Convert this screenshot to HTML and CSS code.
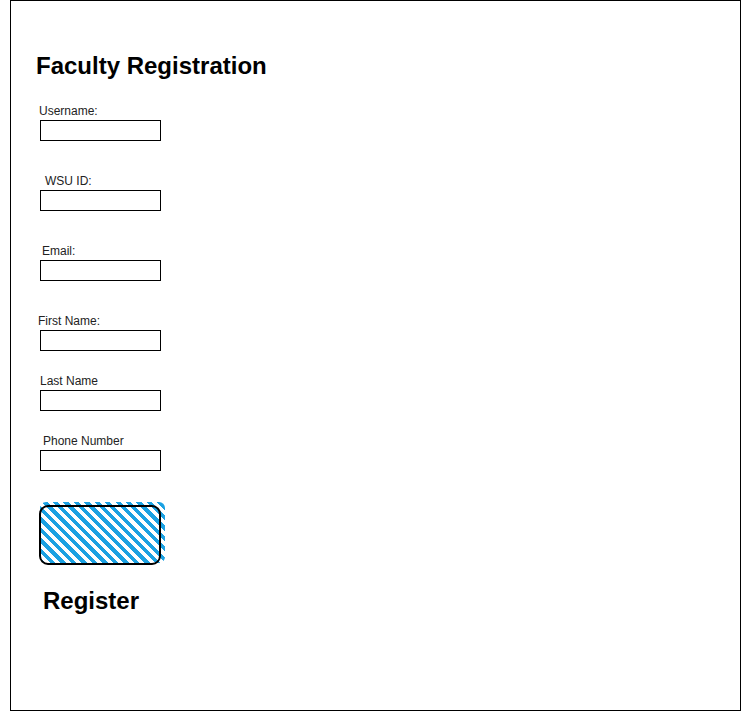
FILE: index.html
```html
<!DOCTYPE html>
<html>
<head>
<meta charset="utf-8">
<link rel="stylesheet" href="styles.css">
</head>
<body>
<div class="frame">
  <h1 class="title">Faculty Registration</h1>
  <div class="field f-user">
    <div class="label">Username:</div>
    <div class="input"></div>
  </div>
  <div class="field f-wsu">
    <div class="label">WSU ID:</div>
    <div class="input"></div>
  </div>
  <div class="field f-email">
    <div class="label">Email:</div>
    <div class="input"></div>
  </div>
  <div class="field f-first">
    <div class="label">First Name:</div>
    <div class="input"></div>
  </div>
  <div class="field f-last">
    <div class="label">Last Name</div>
    <div class="input"></div>
  </div>
  <div class="field f-phone">
    <div class="label">Phone Number</div>
    <div class="input"></div>
  </div>
  <div class="btn">
    <div class="hatch"></div>
    <div class="btn-border"></div>
  </div>
  <div class="register">Register</div>
</div>
</body>
</html>
```
FILE: styles.css
```css
html, body {
  margin: 0;
  padding: 0;
  background: #fff;
}
body {
  font-family: "Liberation Sans", Arial, sans-serif;
  color: #000;
}
.frame {
  box-sizing: border-box;
  margin-left: 10px;
  width: 731px;
  height: 711px;
  border: 1px solid #000;
  display: flex;
  flex-direction: column;
  align-items: flex-start;
}
.title {
  margin: 51px 0 0 25px;
  font-size: 24px;
  line-height: 28px;
  font-weight: bold;
}
.field {
  display: flex;
  flex-direction: column;
  align-items: flex-start;
}
.label {
  font-size: 12px;
  line-height: 14px;
  color: #222;
  padding-top: 2px;
  margin-bottom: 2px;
}
.input {
  box-sizing: border-box;
  width: 121px;
  height: 21px;
  border: 1px solid #000;
  margin-left: 29px;
}
.f-user { margin-top: 22px; }
.f-user .label { padding-left: 28px; }
.f-wsu { margin-top: 31px; }
.f-wsu .label { padding-left: 34px; }
.f-email { margin-top: 31px; }
.f-email .label { padding-left: 31px; }
.f-first { margin-top: 31px; }
.f-first .label { padding-left: 27px; }
.f-last { margin-top: 21px; }
.f-last .label { padding-left: 29px; }
.f-phone { margin-top: 21px; }
.f-phone .label { padding-left: 32px; }
.btn {
  position: relative;
  width: 126px;
  height: 63px;
  margin: 31px 0 0 28px;
}
.hatch {
  position: absolute;
  left: 1px;
  top: 0;
  right: 0;
  bottom: 2px;
  border-radius: 6px;
  background: repeating-linear-gradient(45deg, #1ba1e2 0 3.8px, #fff 3.8px 7.4px);
}
.btn-border {
  position: absolute;
  left: 0;
  top: 3px;
  width: 122px;
  height: 60px;
  box-sizing: border-box;
  border: 2px solid #000;
  border-radius: 9px;
}
.register {
  margin: 22px 0 0 32px;
  font-size: 24px;
  line-height: 28px;
  font-weight: bold;
}
```
